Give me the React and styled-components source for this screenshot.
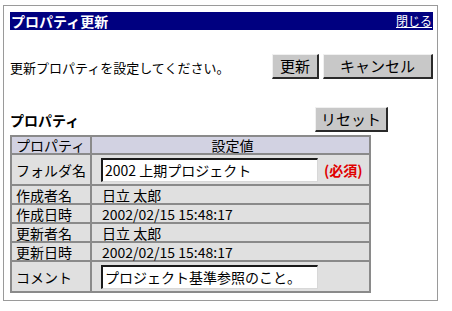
import React from "react";
import styled, { createGlobalStyle } from "styled-components";

const Global = createGlobalStyle`
  html, body { margin: 0; padding: 0; background: #fff; }
  body { font-family: "Noto Sans CJK JP", "Liberation Sans", sans-serif; color: #000; }
`;

const Frame = styled.div`
  box-sizing: border-box;
  margin: 5px 0 0 3px;
  width: 435px;
  height: 296px;
  border: 1px solid #9a9a9a;
  padding: 6px 4px 0 6px;
`;

const TitleBar = styled.div`
  height: 18px;
  background: #000080;
  color: #fff;
  display: flex;
  align-items: center;
  justify-content: space-between;
  padding: 0 1px;
`;

const Title = styled.span`
  font-size: 14px;
  font-weight: bold;
  line-height: 18px;
`;

const CloseLink = styled.a`
  color: #fff;
  font-size: 12px;
  line-height: 16px;
  text-decoration: underline;
  cursor: pointer;
`;

const ActionRow = styled.div`
  margin-top: 24px;
  height: 25px;
  display: flex;
  align-items: center;
  gap: 4px;
`;

const Message = styled.span`
  flex: 1;
  font-size: 13px;
  line-height: 16px;
  padding-top: 2px;
`;

const Button = styled.button`
  box-sizing: border-box;
  width: ${(p) => p.$w}px;
  height: 25px;
  margin: 0;
  padding: 0;
  background: #c8c8c8;
  border-style: solid;
  border-width: 1px 2px 2px 1px;
  border-color: #f0f0f0 #2a2a2a #2a2a2a #f0f0f0;
  font-family: "Noto Sans CJK JP", sans-serif;
  font-size: 15px;
  line-height: 20px;
  color: #000;
`;

const HeadRow = styled.div`
  margin-top: 27px;
  width: 378px;
  height: 26px;
  display: flex;
  align-items: center;
  justify-content: space-between;
`;

const Heading = styled.span`
  font-size: 14px;
  font-weight: bold;
  line-height: 18px;
  padding-top: 2px;
`;

const Table = styled.table`
  margin-top: 3px;
  width: 361px;
  border-collapse: collapse;
  border: 2px solid #8a8a8a;
  font-size: 14px;
  table-layout: fixed;
`;

const Cell = styled.td`
  border: 2px solid #8a8a8a;
  background: ${(p) => (p.$head ? "#d2d2e2" : "#e0e0e0")};
  height: ${(p) => p.$h}px;
  padding: 0 0 0 ${(p) => (p.$pad ?? 4)}px;
  text-align: ${(p) => (p.$center ? "center" : "left")};
  line-height: 16px;
  white-space: nowrap;
  vertical-align: middle;
`;

const Field = styled.div`
  box-sizing: border-box;
  width: 217px;
  height: 24px;
  background: #fff;
  border-style: solid;
  border-width: 2px 1px 1px 2px;
  border-color: #1a1a1a #d8d8d8 #d8d8d8 #1a1a1a;
  padding: 0 2px;
  font-size: 14px;
  line-height: 20px;
  display: inline-block;
  vertical-align: middle;
`;

const Required = styled.span`
  color: #e00000;
  font-weight: bold;
  font-size: 14px;
  margin-left: 6px;
  vertical-align: middle;
`;

const rows = [
  ["作成者名", "日立 太郎"],
  ["作成日時", "2002/02/15 15:48:17"],
  ["更新者名", "日立 太郎"],
  ["更新日時", "2002/02/15 15:48:17"],
];

export default function App() {
  return (
    <>
      <Global />
      <Frame>
        <TitleBar>
          <Title>プロパティ更新</Title>
          <CloseLink>閉じる</CloseLink>
        </TitleBar>
        <ActionRow>
          <Message>更新プロパティを設定してください。</Message>
          <Button $w={47}>更新</Button>
          <Button $w={110}>キャンセル</Button>
        </ActionRow>
        <HeadRow>
          <Heading>プロパティ</Heading>
          <Button $w={73}>リセット</Button>
        </HeadRow>
        <Table>
          <colgroup>
            <col style={{ width: "80px" }} />
            <col />
          </colgroup>
          <tbody>
            <tr>
              <Cell $head $h={16}>プロパティ</Cell>
              <Cell $head $center $h={16}>設定値</Cell>
            </tr>
            <tr>
              <Cell $h={29}>フォルダ名</Cell>
              <Cell $h={29} $pad={9}>
                <Field>2002 上期プロジェクト</Field>
                <Required>(必須)</Required>
              </Cell>
            </tr>
            {rows.map(([k, v]) => (
              <tr key={k}>
                <Cell $h={17}>{k}</Cell>
                <Cell $h={17} $pad={10}>{v}</Cell>
              </tr>
            ))}
            <tr>
              <Cell $h={29}>コメント</Cell>
              <Cell $h={29} $pad={9}>
                <Field>プロジェクト基準参照のこと。</Field>
              </Cell>
            </tr>
          </tbody>
        </Table>
      </Frame>
    </>
  );
}
